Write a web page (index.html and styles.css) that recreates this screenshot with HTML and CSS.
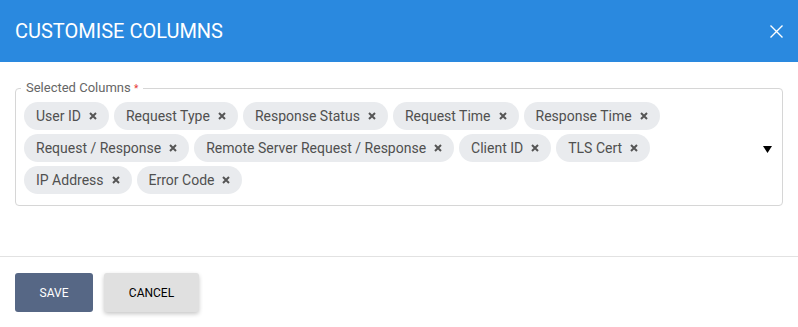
FILE: index.html
```html
<!DOCTYPE html>
<html lang="en">
<head>
<meta charset="utf-8">
<title>Customise Columns</title>
<link rel="stylesheet" href="styles.css">
</head>
<body>
<div class="dialog">
  <header class="dialog-header">
    <h1 class="dialog-title">CUSTOMISE COLUMNS</h1>
    <button class="close-btn" aria-label="Close">
      <svg width="13" height="13" viewBox="0 0 13 13"><path d="M0.5 0.5 L12.5 12.5 M12.5 0.5 L0.5 12.5" stroke="#fff" stroke-width="1.4" fill="none"/></svg>
    </button>
  </header>
  <div class="dialog-body">
    <fieldset class="field">
      <legend class="field-label">Selected Columns <span class="req">*</span></legend>
      <div class="field-row">
        <div class="chips">
          <span class="chip">User ID<svg class="chip-x" viewBox="0 0 8 8"><path d="M1 1 L7 7 M7 1 L1 7"/></svg></span>
          <span class="chip">Request Type<svg class="chip-x" viewBox="0 0 8 8"><path d="M1 1 L7 7 M7 1 L1 7"/></svg></span>
          <span class="chip">Response Status<svg class="chip-x" viewBox="0 0 8 8"><path d="M1 1 L7 7 M7 1 L1 7"/></svg></span>
          <span class="chip">Request Time<svg class="chip-x" viewBox="0 0 8 8"><path d="M1 1 L7 7 M7 1 L1 7"/></svg></span>
          <span class="chip">Response Time<svg class="chip-x" viewBox="0 0 8 8"><path d="M1 1 L7 7 M7 1 L1 7"/></svg></span>
          <span class="chip">Request / Response<svg class="chip-x" viewBox="0 0 8 8"><path d="M1 1 L7 7 M7 1 L1 7"/></svg></span>
          <span class="chip">Remote Server Request / Response<svg class="chip-x" viewBox="0 0 8 8"><path d="M1 1 L7 7 M7 1 L1 7"/></svg></span>
          <span class="chip">Client ID<svg class="chip-x" viewBox="0 0 8 8"><path d="M1 1 L7 7 M7 1 L1 7"/></svg></span>
          <span class="chip">TLS Cert<svg class="chip-x" viewBox="0 0 8 8"><path d="M1 1 L7 7 M7 1 L1 7"/></svg></span>
          <span class="chip">IP Address<svg class="chip-x" viewBox="0 0 8 8"><path d="M1 1 L7 7 M7 1 L1 7"/></svg></span>
          <span class="chip">Error Code<svg class="chip-x" viewBox="0 0 8 8"><path d="M1 1 L7 7 M7 1 L1 7"/></svg></span>
        </div>
        <svg class="caret" width="9" height="7" viewBox="0 0 9 7"><polygon points="0,0 9,0 4.5,7" fill="#000"/></svg>
      </div>
    </fieldset>
  </div>
  <footer class="dialog-footer">
    <button class="btn btn-save">SAVE</button>
    <button class="btn btn-cancel">CANCEL</button>
  </footer>
</div>
</body>
</html>
```
FILE: styles.css
```css
* { box-sizing: border-box; }
html, body { margin: 0; padding: 0; background: #fff; }
body { font-family: Roboto, "Noto Sans", Arial, sans-serif; color: #333; }

.dialog { width: 798px; }

.dialog-header {
  height: 62px;
  background: #2A89DF;
  display: flex;
  align-items: center;
  justify-content: space-between;
  padding: 0 15px;
}
.dialog-title {
  margin: 0;
  font-size: 20px;
  font-weight: 400;
  color: #fff;
}
.close-btn {
  background: none;
  border: 0;
  padding: 0;
  width: 13px;
  height: 13px;
  display: flex;
  cursor: pointer;
  margin-top: 1px;
}

.dialog-body {
  padding: 18px 15px 50px;
}
.field {
  margin: 0;
  min-width: 0;
  border: 1px solid #d6d6d6;
  border-radius: 4px;
  padding: 5px 10px 11px 8px;
}
.field-label {
  font-size: 13px;
  line-height: 16px;
  color: #666;
  padding: 0 5px;
  margin-left: -3px;
}
.req { color: #e53935; font-size: 10px; }

.field-row {
  display: flex;
  align-items: center;
}
.chips {
  flex: 1;
  display: flex;
  flex-wrap: wrap;
  gap: 4px 5px;
  padding-right: 30px;
}
.chip {
  height: 28px;
  border-radius: 14px;
  background: #E9EBEE;
  color: #505050;
  font-size: 14px;
  display: inline-flex;
  align-items: center;
  padding: 0 12px 0 12px;
  white-space: nowrap;
}
.chip-x {
  width: 8px;
  height: 8px;
  margin-left: 8px;
  stroke: #555;
  stroke-width: 2;
  fill: none;
}
.caret { flex: none; margin-top: 2px; }

.dialog-footer {
  border-top: 1px solid #e2e2e2;
  padding: 16px 15px;
  display: flex;
  gap: 11px;
}
.btn {
  height: 39px;
  border: 0;
  border-radius: 3px;
  font-family: Roboto, Arial, sans-serif;
  font-size: 12px;
  font-weight: 400;
  cursor: pointer;
  padding: 0;
}
.btn-save {
  background: #566785;
  color: #fff;
  width: 78px;
}
.btn-cancel {
  background: #e0e0e0;
  color: #000;
  width: 95px;
  box-shadow: 0 2px 4px rgba(0,0,0,0.22);
}
```
